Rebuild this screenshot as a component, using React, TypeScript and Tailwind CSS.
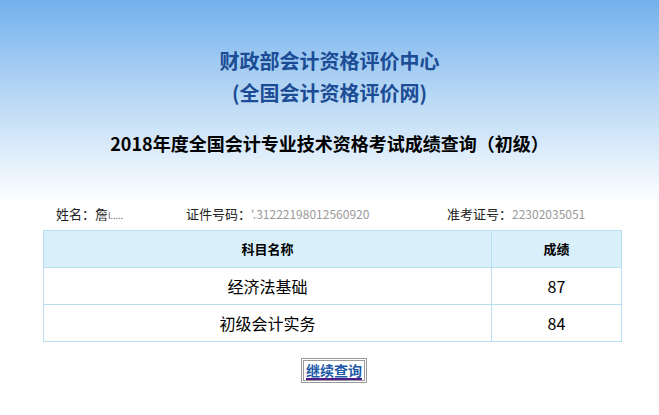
import React from "react";

/**
 * Score query result page
 * Gradient header, candidate info row, score table, continue button
 */

const SCORES = [
  { subject: "经济法基础", score: "87" },
  { subject: "初级会计实务", score: "84" },
];

const FONT = {
  fontFamily: '"Noto Sans CJK SC", "Liberation Sans", sans-serif',
};

export default function App() {
  return (
    <div className="min-h-[415px] w-[659px] bg-white" style={FONT}>
      {/* Header */}
      <div className="bg-gradient-to-b from-[#72b1ec] via-[#bcdaf5] to-white pt-[45px] pb-[49px] text-center">
        <div className="text-[20px] font-bold leading-[32px] text-[#1b4c95]">
          财政部会计资格评价中心
        </div>
        <div className="text-[20px] font-bold leading-[32px] text-[#1b4c95]">
          (全国会计资格评价网)
        </div>
        <div className="mt-[22px] text-[18px] font-bold leading-[24px] text-black">
          2018年度全国会计专业技术资格考试成绩查询（初级）
        </div>
      </div>

      {/* Candidate info */}
      <div className="flex pl-[56px] text-[13px] leading-[20px] text-[#222]">
        <span className="w-[130px]">
          姓名：詹<span className="text-[9px] text-[#666]">l.....</span>
        </span>
        <span className="w-[261px]">
          证件号码：<span className="text-[12px] text-[#999]">'.31222198012560920</span>
        </span>
        <span>
          准考证号：<span className="text-[12px] text-[#999]">22302035051</span>
        </span>
      </div>

      {/* Score table */}
      <table className="mt-[4px] ml-[43px] w-[579px] border-collapse border border-[#b9ddf1]">
        <thead>
          <tr className="h-[37px] bg-[#d9effa]">
            <th className="w-[448px] border border-[#b9ddf1] text-[13px] font-bold text-black">
              科目名称
            </th>
            <th className="border border-[#b9ddf1] text-[13px] font-bold text-black">
              成绩
            </th>
          </tr>
        </thead>
        <tbody>
          {SCORES.map((row) => (
            <tr key={row.subject} className="h-[37px]">
              <td className="border border-[#b9ddf1] text-center text-[16px] text-black">
                {row.subject}
              </td>
              <td className="border border-[#b9ddf1] text-center text-[16px] text-black">
                {row.score}
              </td>
            </tr>
          ))}
        </tbody>
      </table>

      {/* Continue button */}
      <div className="mt-[16px] flex justify-center pl-[9px]">
        <a
          href="#"
          className="border-[3px] border-double border-[#999] px-[2px] text-[14px] font-bold leading-[19px] text-[#1d5ba8] underline decoration-[#4b1a8b] decoration-2 underline-offset-[2px]"
        >
          继续查询
        </a>
      </div>
    </div>
  );
}
